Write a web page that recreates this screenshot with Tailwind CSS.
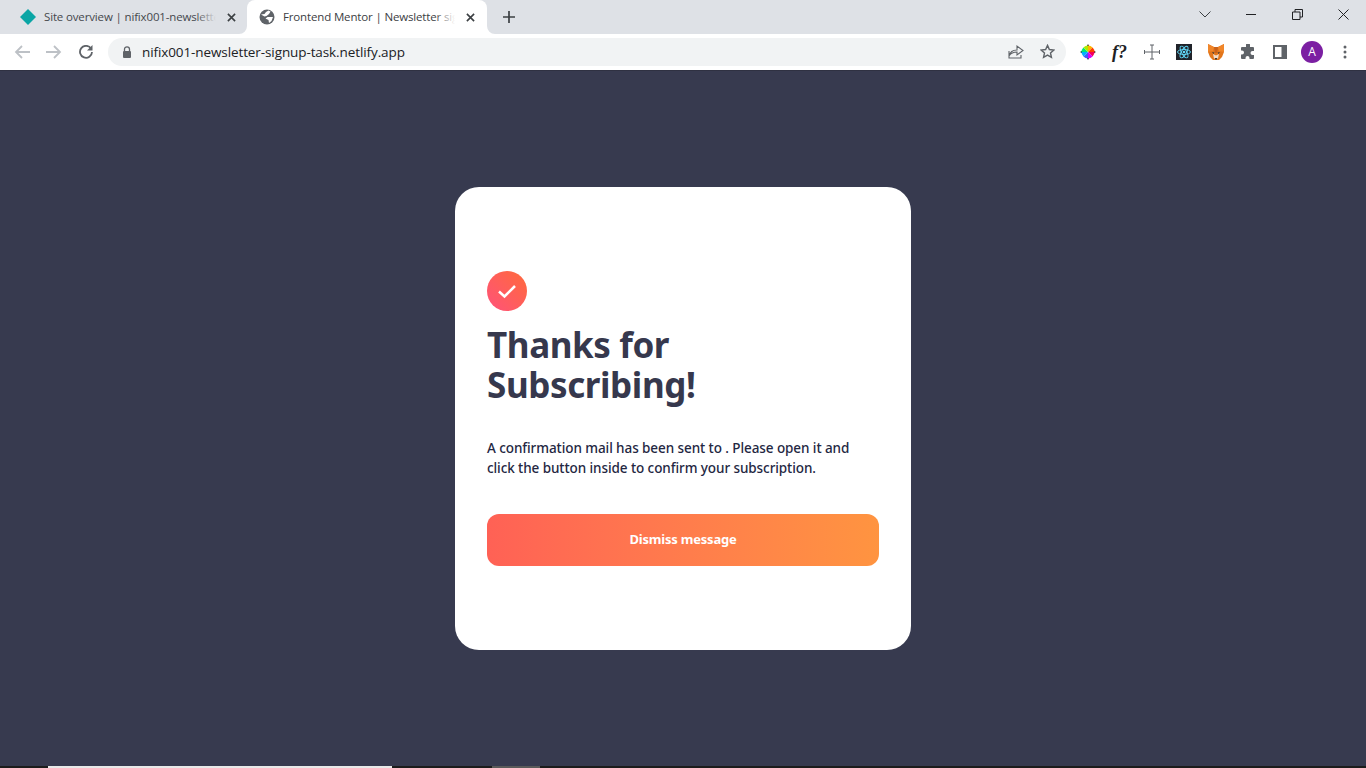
<!DOCTYPE html>
<html lang="en">
<head>
  <meta charset="UTF-8"/>
  <meta name="viewport" content="width=device-width,initial-scale=1.0"/>
  <title>Frontend Mentor | Newsletter signup</title>
  <script src="https://cdn.jsdelivr.net/npm/@tailwindcss/browser@4"></script>
</head>
<body class="h-[768px] w-[1366px] overflow-hidden flex flex-col bg-[#373a4f] font-['Noto_Sans',sans-serif]">

  <!-- TAB STRIP -->
  <div class="h-[34px] shrink-0 flex items-stretch bg-[#dee1e6] font-['Open_Sans',sans-serif] text-[11.5px] tracking-[-0.15px] pl-[8px]">
    <div class="w-[239px] flex items-center pl-[12px] text-[#45484d]">
      <svg class="w-[16px] h-[16px] shrink-0" viewBox="0 0 16 16"><path d="M8 0l8 8-8 8-8-8z" fill="#0aa5a5"/></svg>
      <div class="relative ml-[8px] w-[172px] overflow-hidden whitespace-nowrap">Site overview | nifix001-newsletter
        <div class="absolute inset-y-0 right-0 w-[20px] bg-gradient-to-r from-[#dee1e6]/0 to-[#dee1e6]"></div>
      </div>
      <svg class="w-[9px] h-[9px] ml-[11px] shrink-0" viewBox="0 0 10 10" stroke="#3c4043" stroke-width="1.800"><path d="M1 1l8 8M9 1l-8 8"/></svg>
    </div>
    <div class="relative w-[240px] bg-white rounded-t-[8px] flex items-center pl-[12px] text-[#3c4043]">
      <svg class="absolute left-[-8px] bottom-0 w-[8px] h-[8px]" viewBox="0 0 8 8"><path d="M8 0v8H0a8 8 0 0 0 8-8z" fill="#fff"/></svg>
      <svg class="absolute right-[-8px] bottom-0 w-[8px] h-[8px]" viewBox="0 0 8 8"><path d="M0 0v8h8a8 8 0 0 1-8-8z" fill="#fff"/></svg>
      <svg class="w-[16px] h-[16px] shrink-0" viewBox="0 0 16 16">
        <circle cx="8" cy="8" r="7.500" fill="#5f6368"/>
        <path d="M2 5.500l3.500-.5L7 3l2.500-1.500 2 1L10 5 7.500 7l-2 .5zM14 8l-1.500 4-2.500 2-.5-3-3-1.500 2-1.500z" fill="#fff"/>
      </svg>
      <div class="relative ml-[8px] w-[172px] overflow-hidden whitespace-nowrap">Frontend Mentor | Newsletter signup
        <div class="absolute inset-y-0 right-0 w-[20px] bg-gradient-to-r from-white/0 to-white"></div>
      </div>
      <svg class="w-[9px] h-[9px] ml-[11px] shrink-0" viewBox="0 0 10 10" stroke="#3c4043" stroke-width="1.800"><path d="M1 1l8 8M9 1l-8 8"/></svg>
    </div>
    <div class="flex items-center ml-[16px]">
      <svg class="w-[12px] h-[12px]" viewBox="0 0 12 12" stroke="#3c4043" stroke-width="1.700"><path d="M6 0v12M0 6h12"/></svg>
    </div>
    <!-- window controls -->
    <div class="ml-auto flex items-center -translate-y-[3px]">
      <svg class="w-[12px] h-[7px] mr-[35px]" viewBox="0 0 12 7" fill="none" stroke="#3c4043" stroke-width="1"><path d="M.5.500L6 6l5.500-5.500"/></svg>
      <svg class="w-[10px] h-[1px] mr-[36px]" viewBox="0 0 10 1"><path d="M0 0h10v1H0z" fill="#202124"/></svg>
      <svg class="w-[11px] h-[11px] mr-[35px]" viewBox="0 0 11 11" fill="none" stroke="#202124"><path d="M.5 3h7.500v7.500H.5zM3 3V.5h7.500V8H8"/></svg>
      <svg class="w-[11px] h-[11px] mr-[17px]" viewBox="0 0 11 11" stroke="#202124"><path d="M.5.500l10 10M10.500.500l-10 10"/></svg>
    </div>
  </div>

  <!-- TOOLBAR -->
  <div class="h-[37px] shrink-0 flex items-center bg-white border-b border-[#2f3142] pb-px">
    <svg class="w-[16px] h-[14px] ml-[14px]" viewBox="0 0 16 14" fill="none" stroke="#bdc1c6" stroke-width="1.800"><path d="M16 7H2M8 1L2 7l6 6"/></svg>
    <svg class="w-[16px] h-[14px] ml-[16px]" viewBox="0 0 16 14" fill="none" stroke="#bdc1c6" stroke-width="1.800"><path d="M0 7h14M8 1l6 6-6 6"/></svg>
    <svg class="w-[14px] h-[14px] ml-[17px]" viewBox="0 0 14 14" fill="none"><path d="M12 3.500A6 6 0 1 0 13 7" stroke="#5f6368" stroke-width="1.800"/><path d="M13.500 0v5.500H8z" fill="#5f6368"/></svg>
    <div class="ml-[15px] w-[958px] h-[28px] rounded-full bg-[#f1f3f4] flex items-center pl-[14px] pr-[10px]">
      <svg class="w-[10px] h-[12px] shrink-0" viewBox="0 0 10 12" fill="none"><path d="M2.500 5V3.300a2.500 2.500 0 0 1 5 0V5" stroke="#5f6368" stroke-width="1.300"/><rect x="1" y="5" width="8" height="7" rx="1" fill="#5f6368"/></svg>
      <span class="ml-[10px] pt-[2px] text-[13.5px] leading-none tracking-[-0.1px] text-[#202124] font-['Open_Sans',sans-serif]">nifix001-newsletter-signup-task.netlify.app</span>
      <svg class="w-[16px] h-[15px] ml-auto" viewBox="0 0 16 15" fill="none" stroke="#5f6368" stroke-width="1.100"><path d="M1 7v7h12v-3M1 12c1-4 4-6 8-6V2l6 4.500L9 11V8c-3 0-6 1-8 4z"/></svg>
      <svg class="w-[15px] h-[15px] ml-[16px] mr-[1px]" viewBox="0 0 16 16" fill="none" stroke="#5f6368" stroke-width="1.500"><path d="M8 1.500l2 4.400 4.800.5-3.600 3.200 1 4.700L8 11.900l-4.200 2.400 1-4.700L1.200 6.400 6 5.900z"/></svg>
    </div>
    <!-- extensions -->
    <svg class="w-[16px] h-[16px] ml-[14px]" viewBox="0 0 16 16">
      <circle cx="8" cy="1.500" r="1" fill="#333"/><circle cx="8" cy="14.500" r="1" fill="#333"/><circle cx="1.500" cy="8" r="1" fill="#333"/><circle cx="14.500" cy="8" r="1" fill="#333"/>
      <path d="M8 8V1.500A6.500 6.500 0 0 1 12.600 3.400z" fill="#ffb300"/><path d="M8 8l4.600-4.600A6.500 6.500 0 0 1 14.500 8z" fill="#ff3d00"/>
      <path d="M8 8h6.500a6.500 6.500 0 0 1-1.900 4.600z" fill="#f50057"/><path d="M8 8l4.600 4.600A6.500 6.500 0 0 1 8 14.500z" fill="#d500f9"/>
      <path d="M8 8v6.500a6.500 6.500 0 0 1-4.600-1.900z" fill="#3d5afe"/><path d="M8 8l-4.600 4.600A6.500 6.500 0 0 1 1.500 8z" fill="#00b0ff"/>
      <path d="M8 8H1.500a6.500 6.500 0 0 1 1.900-4.600z" fill="#00e676"/><path d="M8 8L3.400 3.400A6.500 6.500 0 0 1 8 1.500z" fill="#aeea00"/>
    </svg>
    <span class="ml-[16px] w-[16px] text-[18px] leading-none font-bold italic text-[#202124] whitespace-nowrap font-['Liberation_Serif',serif]">f?</span>
    <svg class="w-[16px] h-[16px] ml-[16px]" viewBox="0 0 16 16" fill="none" stroke="#5f6368"><path d="M8 1v14M.5 8h15M.5 6v4M15.500 6v4M6 1h4M6 15h4"/></svg>
    <svg class="w-[16px] h-[16px] ml-[16px]" viewBox="0 0 16 16">
      <rect width="16" height="16" fill="#20232a"/>
      <g fill="none" stroke="#61dafb" stroke-width=".9"><ellipse cx="8" cy="8" rx="6.500" ry="2.500"/><ellipse cx="8" cy="8" rx="6.500" ry="2.500" transform="rotate(60 8 8)"/><ellipse cx="8" cy="8" rx="6.500" ry="2.500" transform="rotate(120 8 8)"/></g>
      <circle cx="8" cy="8" r="1.300" fill="#61dafb"/>
    </svg>
    <svg class="w-[16px] h-[16px] ml-[16px]" viewBox="0 0 16 16">
      <path d="M0 0l6 3h4l6-3 0 5 0 3-2 5-3 3H5l-3-3-2-5 0-3z" fill="#e2761b"/>
      <path d="M0 0l6 3-1 4-5 1zM16 0l-6 3 1 4 5 1z" fill="#f0862a"/>
      <path d="M5 10l3 1.500L11 10l-1 4.500H6z" fill="#f2dcc8"/><path d="M7 14h2v1.500H7z" fill="#3a3a3a"/>
      <path d="M4 8l2.500.5-1 1.500zM12 8l-2.500.5 1 1.500z" fill="#3a3a3a"/>
      <path d="M6 3h4l-1 6H7z" fill="#c9611a"/>
    </svg>
    <svg class="w-[16px] h-[16px] ml-[16px]" viewBox="0 0 16 16"><path d="M6 1a2 2 0 0 1 4 0v2h3a1 1 0 0 1 1 1v3h-1.500a2 2 0 0 0 0 4H14v3a1 1 0 0 1-1 1H9.500v-1a2 2 0 0 0-4 0v1H2a1 1 0 0 1-1-1v-3.500h1a2 2 0 0 0 0-4H1V4a1 1 0 0 1 1-1h4z" fill="#5f6368"/></svg>
    <svg class="w-[14px] h-[14px] ml-[17px]" viewBox="0 0 14 14"><path d="M0 0h14v14H0z" fill="#5f6368"/><path d="M2 2h6.500v10H2z" fill="#fff"/></svg>
    <div class="ml-[14px] w-[22px] h-[22px] rounded-full bg-[#7b1fa2] text-white text-[12px] flex items-center justify-center font-['Open_Sans',sans-serif]">A</div>
    <svg class="w-[4px] h-[14px] ml-[20px]" viewBox="0 0 4 14" fill="#5f6368"><circle cx="2" cy="2" r="1.500"/><circle cx="2" cy="7" r="1.500"/><circle cx="2" cy="12" r="1.500"/></svg>
  </div>

  <!-- PAGE -->
  <main class="flex-1 flex items-center justify-center">
    <div class="w-[456px] h-[463px] bg-white rounded-[24px] px-[32px] py-[84px] flex flex-col">
      <svg class="w-[40px] h-[40px] shrink-0" viewBox="0 0 40 40">
        <defs><linearGradient id="tick" x1="0" y1="1" x2="1" y2="0"><stop offset="0" stop-color="#ff527b"/><stop offset="1" stop-color="#ff6a3a"/></linearGradient></defs>
        <circle cx="20" cy="20" r="20" fill="url(#tick)"/>
        <path d="M12 20.500l5.500 5L28 15" fill="none" stroke="#fff" stroke-width="2.500"/>
      </svg>
      <h1 class="mt-[14px] text-[35px] leading-[40px] font-bold tracking-[-0.4px] text-[#36384d]">Thanks for<br/>Subscribing!</h1>
      <p class="mt-[33px] text-[13.5px] leading-[20px] font-medium tracking-[-0.08px] text-[#242742]">A confirmation mail has been sent to . Please open it and click the button inside to confirm your subscription.</p>
      <button class="mt-[36px] h-[52px] shrink-0 rounded-[12px] bg-gradient-to-r from-[#ff6155] to-[#ff9440] text-white text-[13px] tracking-[-0.2px] font-bold">Dismiss message</button>
    </div>
  </main>

  <!-- bottom edge of the window -->
  <div class="h-[2px] shrink-0 bg-[#1c1c1c] flex">
    <div class="ml-[48px] w-[344px] bg-[#e8e8e8]"></div>
    <div class="ml-[100px] w-[48px] bg-[#5a5a5a]"></div>
  </div>
</body>
</html>
